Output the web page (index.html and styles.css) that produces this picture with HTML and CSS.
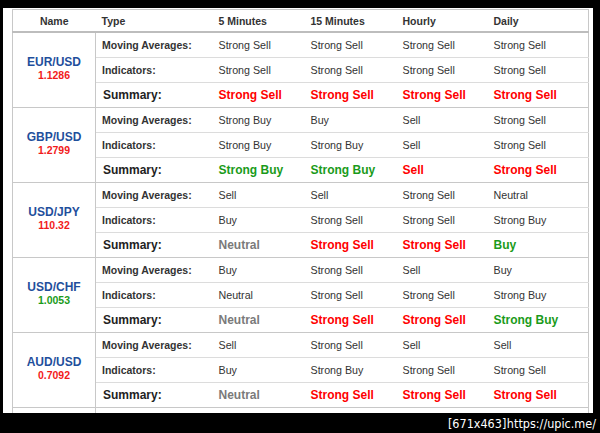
FILE: index.html
```html
<!DOCTYPE html>
<html>
<head>
<meta charset="utf-8">
<link rel="stylesheet" href="styles.css">
</head>
<body>
<div class="frame">
<table class="tech">
<colgroup>
<col class="c-name"><col class="c-type"><col class="c-5m"><col class="c-15m"><col class="c-h"><col class="c-d">
</colgroup>
<thead>
<tr><th class="th-name">Name</th><th>Type</th><th>5 Minutes</th><th>15 Minutes</th><th>Hourly</th><th>Daily</th></tr>
</thead>
<tbody>
<tr class="first"><td class="pair" rowspan="3"><div class="sym">EUR/USD</div><div class="price down">1.1286</div></td><td class="lbl">Moving Averages:</td><td>Strong Sell</td><td>Strong Sell</td><td>Strong Sell</td><td>Strong Sell</td></tr>
<tr><td class="lbl">Indicators:</td><td>Strong Sell</td><td>Strong Sell</td><td>Strong Sell</td><td>Strong Sell</td></tr>
<tr class="sum"><td class="lbl">Summary:</td><td class="sell">Strong Sell</td><td class="sell">Strong Sell</td><td class="sell">Strong Sell</td><td class="sell">Strong Sell</td></tr>

<tr class="first"><td class="pair" rowspan="3"><div class="sym">GBP/USD</div><div class="price down">1.2799</div></td><td class="lbl">Moving Averages:</td><td>Strong Buy</td><td>Buy</td><td>Sell</td><td>Strong Sell</td></tr>
<tr><td class="lbl">Indicators:</td><td>Strong Buy</td><td>Strong Buy</td><td>Sell</td><td>Strong Sell</td></tr>
<tr class="sum"><td class="lbl">Summary:</td><td class="buy">Strong Buy</td><td class="buy">Strong Buy</td><td class="sell">Sell</td><td class="sell">Strong Sell</td></tr>

<tr class="first"><td class="pair" rowspan="3"><div class="sym">USD/JPY</div><div class="price down">110.32</div></td><td class="lbl">Moving Averages:</td><td>Sell</td><td>Sell</td><td>Strong Sell</td><td>Neutral</td></tr>
<tr><td class="lbl">Indicators:</td><td>Buy</td><td>Strong Sell</td><td>Strong Sell</td><td>Strong Buy</td></tr>
<tr class="sum"><td class="lbl">Summary:</td><td class="neutral">Neutral</td><td class="sell">Strong Sell</td><td class="sell">Strong Sell</td><td class="buy">Buy</td></tr>

<tr class="first"><td class="pair" rowspan="3"><div class="sym">USD/CHF</div><div class="price up">1.0053</div></td><td class="lbl">Moving Averages:</td><td>Buy</td><td>Strong Sell</td><td>Sell</td><td>Buy</td></tr>
<tr><td class="lbl">Indicators:</td><td>Neutral</td><td>Strong Sell</td><td>Strong Sell</td><td>Strong Buy</td></tr>
<tr class="sum"><td class="lbl">Summary:</td><td class="neutral">Neutral</td><td class="sell">Strong Sell</td><td class="sell">Strong Sell</td><td class="buy">Strong Buy</td></tr>

<tr class="first"><td class="pair" rowspan="3"><div class="sym">AUD/USD</div><div class="price down">0.7092</div></td><td class="lbl">Moving Averages:</td><td>Sell</td><td>Strong Sell</td><td>Sell</td><td>Sell</td></tr>
<tr><td class="lbl">Indicators:</td><td>Buy</td><td>Strong Buy</td><td>Strong Sell</td><td>Strong Sell</td></tr>
<tr class="sum"><td class="lbl">Summary:</td><td class="neutral">Neutral</td><td class="sell">Strong Sell</td><td class="sell">Strong Sell</td><td class="sell">Strong Sell</td></tr>

<tr class="first"><td class="pair"></td><td class="lbl"></td><td></td><td></td><td></td><td></td></tr>
</tbody>
</table>
</div>
<div class="mark">[671x463] https://upic.me/</div>
</body>
</html>
```

FILE: styles.css
```css
html, body {
  margin: 0;
  padding: 0;
  background: #000;
  width: 600px;
  height: 433px;
  overflow: hidden;
}

.frame {
  margin: 8px 0 0 3px;
  width: 590px;
  height: 405px;
  padding: 1px 0 0 9px;
  box-sizing: border-box;
  background: #fff;
  overflow: hidden;
}

.tech {
  border-collapse: collapse;
  table-layout: fixed;
  width: 576px;
  font-family: "Liberation Sans", Arial, sans-serif;
  color: #333;
}

.c-name { width: 83px; }
.c-type { width: 117px; }
.c-5m { width: 92px; }
.c-15m { width: 92px; }
.c-h { width: 91px; }
.c-d { width: 101px; }

.tech th,
.tech td {
  border: 1px solid #dcdcdc;
  border-left: none;
  border-right: none;
  padding: 0 0 0 6px;
  text-align: left;
  white-space: nowrap;
  overflow: hidden;
}

.tech th {
  height: 21px;
  font-size: 10.5px;
  font-weight: bold;
  color: #333;
  border-top-color: #c8c8c8;
  border-bottom: 2px solid #bdbdbd;
}

.tech th.th-name {
  text-align: center;
  padding: 0;
}

.tech td {
  height: 24px;
  font-size: 10.7px;
}

.tech td:first-child,
.tech th:first-child {
  border-left: 1px solid #c8c8c8;
}

.tech td:last-child,
.tech th:last-child {
  border-right: 1px solid #c8c8c8;
}

.tech td.pair {
  text-align: center;
  padding: 0;
  border-right: 1px solid #c8c8c8;
  border-bottom: 1px solid #c8c8c8;
}

.tech tr.first td {
  border-top: 1px solid #c8c8c8;
}

.tech td.lbl {
  font-size: 10.5px;
  font-weight: bold;
  color: #333;
}

.tech tr.sum td {
  font-size: 12px;
  font-weight: bold;
  border-bottom: 1px solid #c8c8c8;
}

.tech tr.sum td.lbl {
  font-size: 12px;
  padding-left: 7px;
  color: #222;
}

.sym {
  color: #1f4f9c;
  font-size: 12px;
  font-weight: bold;
  line-height: 14px;
  margin-top: -3px;
}

.price {
  font-size: 10.5px;
  font-weight: bold;
  line-height: 13px;
}

.down { color: #f21b1b; }
.up { color: #1a9b1a; }

.tech td.sell { color: #ff0000; }
.tech td.buy { color: #1a9b1a; }
.tech td.neutral { color: #7a7a7a; }

.mark {
  height: 20px;
  padding-right: 4px;
  text-align: right;
  color: #fff;
  font-family: "DejaVu Sans Condensed", "DejaVu Sans", sans-serif;
  font-size: 12.5px;
  line-height: 21px;
  word-spacing: -3px;
}
```
